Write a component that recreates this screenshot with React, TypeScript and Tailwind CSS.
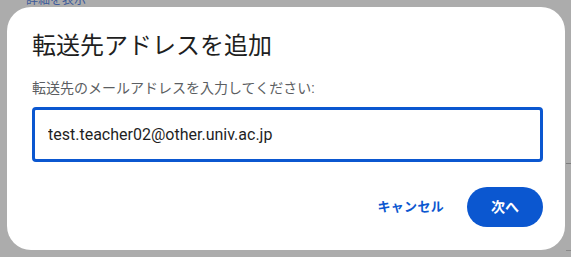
import React from "react";

export default function App() {
  const [email, setEmail] = React.useState("test.teacher02@other.univ.ac.jp");

  return (
    <div
      className="relative w-[571px] h-[257px] overflow-hidden bg-[#acacac] pt-[7px] pl-[7px]"
      style={{ fontFamily: "Roboto, 'Noto Sans CJK JP', sans-serif" }}
    >
      {/* page peeking out behind the dialog */}
      <span className="absolute left-[26px] top-[-6px] text-[12px] leading-[12px] text-[#3c5a9a]">詳細を表示</span>
      <div className="absolute right-0 top-[163px] h-px w-[5px] bg-[#7d7d7d]" />
      <div className="absolute right-0 top-[250px] h-px w-[5px] bg-[#8a8a8a]" />

      <div className="flex w-[558px] h-[243px] flex-col rounded-[24px] bg-white pl-[25px] pr-[22px] pt-[23px]">
        <h2 className="text-[24px] leading-[32px] text-[#1f1f1f]">転送先アドレスを追加</h2>
        <p className="mt-[16px] text-[14px] leading-[20px] text-[#5b5e62]">
          転送先のメールアドレスを入力してください:
        </p>
        <input
          value={email}
          onChange={(e) => setEmail(e.target.value)}
          className="mt-[9px] h-[55px] w-[511px] rounded-[4px] border-[3px] border-[#0b57d0] px-[13px] text-[16px] text-[#1f1f1f] outline-none"
        />
        <div className="mt-[25px] flex items-center justify-end gap-[11px]">
          <button className="h-[40px] rounded-full px-[12px] text-[13px] tracking-[0.3px] font-bold text-[#0b57d0]">
            キャンセル
          </button>
          <button className="h-[40px] w-[76px] rounded-full bg-[#0b57d0] text-[14px] font-bold text-white">
            次へ
          </button>
        </div>
      </div>
    </div>
  );
}
